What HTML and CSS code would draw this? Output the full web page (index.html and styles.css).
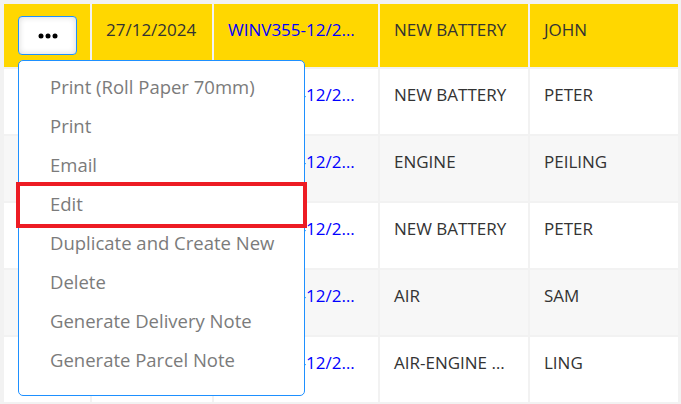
FILE: index.html
```html
<!DOCTYPE html>
<html>
<head>
<meta charset="utf-8">
<link rel="stylesheet" href="styles.css">
</head>
<body>
<div class="table">
  <div class="row selected">
    <div class="cell action">
      <button class="more"><svg width="20" height="6" viewBox="0 0 20 6"><circle cx="3" cy="3" r="2.5"/><circle cx="10" cy="3" r="2.5"/><circle cx="17" cy="3" r="2.5"/></svg></button>
      <div class="menu">
        <div class="item">Print (Roll Paper 70mm)</div>
        <div class="item">Print</div>
        <div class="item">Email</div>
        <div class="item hl">Edit</div>
        <div class="item">Duplicate and Create New</div>
        <div class="item">Delete</div>
        <div class="item">Generate Delivery Note</div>
        <div class="item">Generate Parcel Note</div>
      </div>
    </div>
    <div class="cell">27/12/2024</div>
    <div class="cell link">WINV355-12/2024</div>
    <div class="cell">NEW BATTERY</div>
    <div class="cell">JOHN</div>
  </div>
  <div class="row">
    <div class="cell action"></div>
    <div class="cell">27/12/2024</div>
    <div class="cell link">WINV354-12/2024</div>
    <div class="cell">NEW BATTERY</div>
    <div class="cell">PETER</div>
  </div>
  <div class="row alt">
    <div class="cell action"></div>
    <div class="cell">26/12/2024</div>
    <div class="cell link">WINV353-12/2024</div>
    <div class="cell">ENGINE</div>
    <div class="cell">PEILING</div>
  </div>
  <div class="row">
    <div class="cell action"></div>
    <div class="cell">26/12/2024</div>
    <div class="cell link">WINV352-12/2024</div>
    <div class="cell">NEW BATTERY</div>
    <div class="cell">PETER</div>
  </div>
  <div class="row alt">
    <div class="cell action"></div>
    <div class="cell">24/12/2024</div>
    <div class="cell link">WINV351-12/2024</div>
    <div class="cell">AIR</div>
    <div class="cell">SAM</div>
  </div>
  <div class="row">
    <div class="cell action"></div>
    <div class="cell">23/12/2024</div>
    <div class="cell link">WINV350-12/2024</div>
    <div class="cell">AIR-ENGINE SERVICE</div>
    <div class="cell">LING</div>
  </div>
</div>
</body>
</html>
```
FILE: styles.css
```css
html, body {
  margin: 0;
  padding: 0;
  background: #f2f2f2;
  width: 681px;
  height: 404px;
  overflow: hidden;
}
body {
  font-family: "Open Sans", "Liberation Sans", sans-serif;
  font-size: 17px;
  color: #333;
}
.table {
  display: flex;
  flex-direction: column;
  gap: 2px;
  padding: 4px 0 0 4px;
}
.row {
  display: grid;
  grid-template-columns: 86px 120px 164px 148px 148px;
  column-gap: 2px;
  height: 65px;
  background: #f2f2f2;
}
.row.selected { height: 63px; }
.cell {
  background: #fff;
  padding: 13px 12px 0 14px;
  line-height: 26px;
  white-space: nowrap;
  overflow: hidden;
  text-overflow: ellipsis;
}
.row .cell.link { padding-right: 16px; }
.row .cell:nth-child(4) { padding-right: 18px; }
.row.alt .cell { background: #f7f7f7; }
.row.selected .cell { background: #ffd700; }
.link { color: #0000ff; }
.action {
  position: relative;
  overflow: visible;
  padding: 12px 0 0 14px;
}
.more {
  width: 59px;
  height: 39px;
  border: 1px solid #1e90ff;
  border-radius: 4px;
  background: #fff;
  box-shadow: inset 0 0 6px rgba(0,0,0,0.16);
  padding: 0;
  display: flex;
  align-items: center;
  justify-content: center;
}
.more svg { fill: #000; display: block; }
.menu {
  position: absolute;
  left: 14px;
  top: 56px;
  width: 285px;
  background: #fff;
  border: 1px solid #1e90ff;
  border-radius: 5px;
  padding: 6px 0 16px;
  z-index: 10;
}
.item {
  position: relative;
  height: 39px;
  line-height: 39px;
  padding-left: 31px;
  font-size: 18.5px;
  color: #7b7b7b;
}
.item.hl::after {
  content: "";
  position: absolute;
  left: -3px;
  right: -3px;
  top: -2px;
  bottom: -5px;
  border: 4px solid #ed1c24;
}
```
